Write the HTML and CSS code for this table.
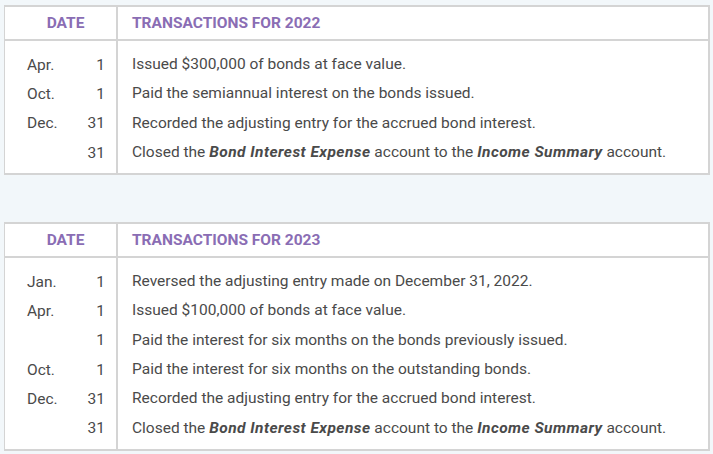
FILE: index.html
```html
<!DOCTYPE html>
<html>
<head>
<meta charset="utf-8">
<link rel="stylesheet" href="styles.css">
</head>
<body>
<div class="page">
  <div class="tbl">
    <div class="head">
      <div class="h-date">DATE</div>
      <div class="h-desc">TRANSACTIONS FOR 2022</div>
    </div>
    <div class="body">
      <div class="dates">
        <div class="row"><span class="mo">Apr.</span><span class="day">1</span></div>
        <div class="row"><span class="mo">Oct.</span><span class="day">1</span></div>
        <div class="row"><span class="mo">Dec.</span><span class="day">31</span></div>
        <div class="row"><span class="mo"></span><span class="day">31</span></div>
      </div>
      <div class="descs">
        <div class="line">Issued $300,000 of bonds at face value.</div>
        <div class="line">Paid the semiannual interest on the bonds issued.</div>
        <div class="line">Recorded the adjusting entry for the accrued bond interest.</div>
        <div class="line">Closed the <b><i>Bond Interest Expense</i></b> account to the <b><i>Income Summary</i></b> account.</div>
      </div>
    </div>
  </div>

  <div class="tbl">
    <div class="head">
      <div class="h-date">DATE</div>
      <div class="h-desc">TRANSACTIONS FOR 2023</div>
    </div>
    <div class="body">
      <div class="dates">
        <div class="row"><span class="mo">Jan.</span><span class="day">1</span></div>
        <div class="row"><span class="mo">Apr.</span><span class="day">1</span></div>
        <div class="row"><span class="mo"></span><span class="day">1</span></div>
        <div class="row"><span class="mo">Oct.</span><span class="day">1</span></div>
        <div class="row"><span class="mo">Dec.</span><span class="day">31</span></div>
        <div class="row"><span class="mo"></span><span class="day">31</span></div>
      </div>
      <div class="descs">
        <div class="line">Reversed the adjusting entry made on December 31, 2022.</div>
        <div class="line">Issued $100,000 of bonds at face value.</div>
        <div class="line">Paid the interest for six months on the bonds previously issued.</div>
        <div class="line">Paid the interest for six months on the outstanding bonds.</div>
        <div class="line">Recorded the adjusting entry for the accrued bond interest.</div>
        <div class="line">Closed the <b><i>Bond Interest Expense</i></b> account to the <b><i>Income Summary</i></b> account.</div>
      </div>
    </div>
  </div>
</div>
</body>
</html>
```
FILE: styles.css
```css
* { box-sizing: border-box; }
html, body {
  margin: 0;
  padding: 0;
  background: #f2f7fa;
}
body {
  font-family: Roboto, "Liberation Sans", sans-serif;
  color: #4a4a4a;
  font-size: 15.5px;
}
.page {
  padding: 5px 3px 0 4px;
  display: flex;
  flex-direction: column;
  gap: 47px;
}
.tbl {
  background: #fff;
  border: 2px solid #d4d4d4;
  border-left-width: 1px;
}
.head {
  display: grid;
  grid-template-columns: 113px 1fr;
  border-bottom: 2px solid #d4d4d4;
  height: 34px;
}
.h-date, .h-desc {
  color: #8a6db4;
  font-weight: 700;
  font-size: 15.5px;
  display: flex;
  align-items: center;
}
.h-date {
  justify-content: center;
  border-right: 2px solid #d4d4d4;
  padding-left: 10px;
}
.h-desc {
  padding-left: 14px;
}
.body {
  display: grid;
  grid-template-columns: 113px 1fr;
}
.dates {
  border-right: 2px solid #d4d4d4;
  padding: 9px 11px 6px 22px;
}
.descs {
  padding: 9px 0 6px 14px;
}
.row {
  height: 29.3px;
  display: flex;
  align-items: center;
  justify-content: space-between;
}
.line {
  height: 29.3px;
  line-height: 29.3px;
  white-space: nowrap;
}
b i {
  font-weight: 700;
  font-style: italic;
  letter-spacing: 0.45px;
}
```
